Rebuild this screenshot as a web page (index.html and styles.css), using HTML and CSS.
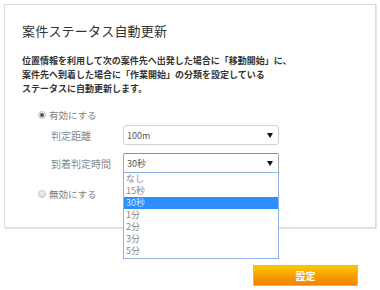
FILE: index.html
```html
<!DOCTYPE html>
<html>
<head>
    <title>案件ステータス自動更新</title>
    <link rel="stylesheet" href="styles.css">
</head>
<body>
<div class="card">
    <h1 class="title">案件ステータス自動更新</h1>
    <p class="desc">位置情報を利用して次の案件先へ出発した場合に「移動開始」に、<br>案件先へ到着した場合に「作業開始」の分類を設定している<br>ステータスに自動更新します。</p>

    <div class="radio-row">
        <span class="radio checked"></span>
        <span class="radio-label">有効にする</span>
    </div>

    <div class="form-row">
        <span class="label">判定距離</span>
        <div class="select">
            <span class="value">100m</span>
            <span class="arrow"></span>
        </div>
    </div>

    <div class="form-row">
        <span class="label">到着判定時間</span>
        <div class="select open">
            <span class="value">30秒</span>
            <span class="arrow"></span>
            <ul class="options">
                <li>なし</li>
                <li>15秒</li>
                <li class="selected">30秒</li>
                <li>1分</li>
                <li>2分</li>
                <li>3分</li>
                <li>5分</li>
            </ul>
        </div>
    </div>

    <div class="radio-row off">
        <span class="radio"></span>
        <span class="radio-label">無効にする</span>
    </div>
</div>

<div class="footer">
    <button class="submit">設定</button>
</div>
</body>
</html>
```

FILE: styles.css
```css
html, body, h1, p, ul {
    margin: 0;
    padding: 0;
}
body {
    font-family: "Noto Sans CJK JP", "Noto Sans", sans-serif;
    color: #333;
    background: #fff;
}
.card {
    margin: 4px 0 0 4px;
    width: 372px;
    height: 224px;
    border: 1px solid #dcdcdc;
    box-shadow: 1px 1px 0 #e6e6e6;
    padding: 0 0 0 17px;
    box-sizing: border-box;
}
.title {
    font-size: 13px;
    font-weight: normal;
    line-height: 16px;
    letter-spacing: 0.2px;
    color: #333;
    padding-top: 18px;
}
.desc {
    margin-top: 15px;
    font-size: 9px;
    line-height: 14px;
    font-weight: bold;
    color: #333;
}
.radio-row {
    display: flex;
    align-items: center;
    height: 14px;
    margin: 12px 0 0 16px;
}
.radio-row.off {
    margin-top: 14px;
}
.radio {
    width: 8px;
    height: 8px;
    border-radius: 50%;
    box-sizing: border-box;
    border: 1px solid #c4c4c4;
    background: linear-gradient(#f4f4f4, #dcdcdc);
    margin-right: 3px;
    display: flex;
    align-items: center;
    justify-content: center;
}
.radio.checked::after {
    content: "";
    width: 4px;
    height: 4px;
    border-radius: 50%;
    background: #555;
}
.radio-label {
    font-size: 9.5px;
    color: #808080;
}
.form-row {
    display: flex;
    align-items: center;
    margin: 3px 0 0 29px;
    height: 20px;
}
.form-row + .form-row {
    margin-top: 8px;
}
.label {
    width: 72px;
    font-size: 10px;
    color: #888;
}
.select {
    position: relative;
    width: 156px;
    height: 20px;
    box-sizing: border-box;
    border: 1px solid #d2d2d2;
    border-radius: 3px;
    background: #fff;
    display: flex;
    align-items: center;
    padding: 0 5px 0 3px;
}
.select.open {
    border-color: #a6a6a6;
    border-top-color: #8c8c8c;
    border-radius: 2px 2px 0 0;
}
.value {
    flex: 1;
    font-size: 9px;
    color: #555;
}
.arrow {
    width: 0;
    height: 0;
    border-left: 3px solid transparent;
    border-right: 3px solid transparent;
    border-top: 5px solid #111;
}
.options {
    position: absolute;
    top: 18px;
    left: -1px;
    width: 156px;
    box-sizing: border-box;
    border: 1px solid #8eb2ea;
    background: #fff;
    list-style: none;
    padding: 0 0 1px;
}
.options li {
    height: 12px;
    line-height: 12px;
    font-size: 9px;
    padding-left: 2px;
    color: #888;
}
.options li.selected {
    background: #2b8fff;
    color: #cfe4ff;
}
.footer {
    display: flex;
    justify-content: flex-end;
    padding-right: 22px;
    margin-top: 37px;
}
.submit {
    width: 105px;
    height: 21px;
    border: 1px solid #f3b25a;
    background: linear-gradient(#ffc600, #f49a00 60%, #f08200);
    color: #fff;
    font-family: "Noto Sans CJK JP", sans-serif;
    font-size: 10px;
    font-weight: bold;
    padding: 0;
}
```
